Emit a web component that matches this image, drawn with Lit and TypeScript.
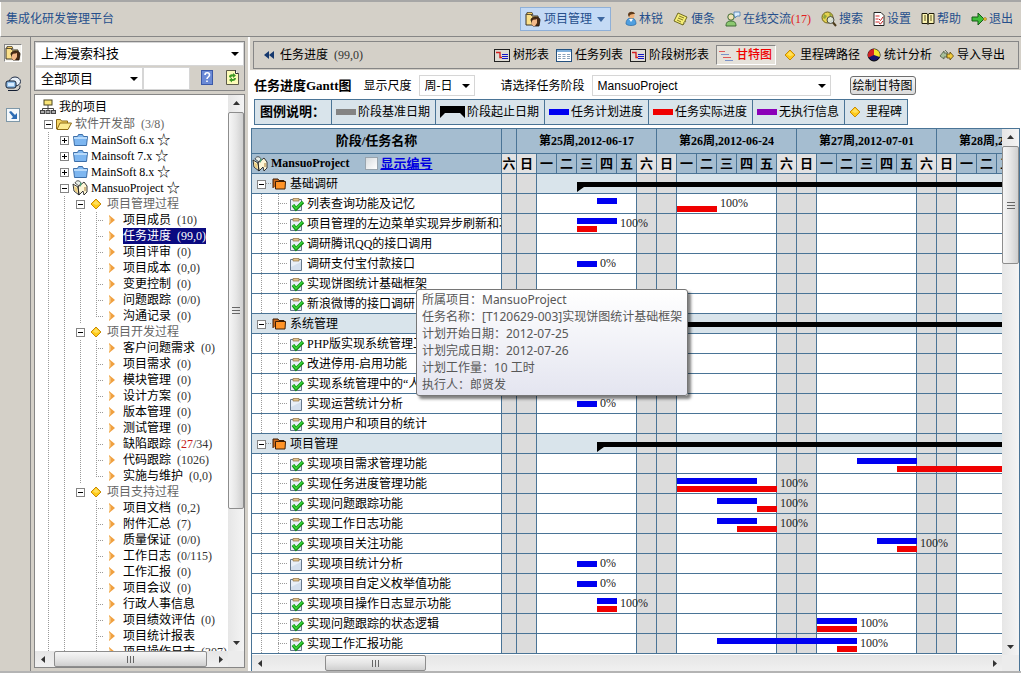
import { LitElement, html, css, svg, nothing, type TemplateResult } from "lit";
import { customElement, property } from "lit/decorators.js";
import { classMap } from "lit/directives/class-map.js";

/* ---------- icons ---------- */

const ICONS: Record<string, [string, TemplateResult]> = {
  portfolio: ["0 0 16 16", svg`
    <path d="M1 3h5l1 2h6v9H1z" fill="#fbe08a" stroke="#3a3222"/>
    <path d="M2 1.500h5l1 2h-6z" fill="#f7cf62" stroke="#3a3222" stroke-width=".7"/>
    <path d="M6 9c0-4 9-4 9 0l-1 6H8z" fill="#4a2c16" stroke="#1c1009" stroke-width=".8"/>
    <path d="M7 10c1-2 3-1 5-2v4l-2 3H8c-1-1-2-3-1-5z" fill="#f3b98a"/>`],
  user: ["0 0 12 16", svg`
    <path d="M1 13c0-4 2-6 5-6s5 2 5 6c-2 2-8 2-10 0z" fill="#4f9fe0" stroke="#2767a3" stroke-width=".7"/>
    <path d="M4 8l2 3 2-3z" fill="#fff"/><circle cx="6.500" cy="4.500" r="3" fill="#efb27a"/>
    <path d="M3 4c0-4 6-4 7-1-2 0-4 0-5 1l-1 2z" fill="#5c3a1c"/>`],
  note: ["0 0 16 16", svg`
    <path d="M5 2l9 4-4 8-9-4z" fill="#f6ee74" stroke="#6f6a22"/>
    <path d="M6 5l5 2M5 7l5 2M4 9l4 2" stroke="#827a2a" fill="none"/><path d="M10 14l1-3 2-1z" fill="#fff" stroke="#6f6a22" stroke-width=".6"/>`],
  chat: ["0 0 16 16", svg`
    <circle cx="6" cy="6" r="3.200" fill="#f1e2b4" stroke="#3d6b33"/>
    <path d="M1 15c0-4 2-5 5-5s5 1 5 5z" fill="#8cc870" stroke="#3d6b33"/>
    <path d="M9 1h6v4h-3l-2 2V5H9z" fill="#d8ebfb" stroke="#4a7bb0" stroke-width=".8"/>`],
  search: ["0 0 16 16", svg`
    <circle cx="6.500" cy="6.500" r="5.500" fill="#e6d251" stroke="#6d6118"/>
    <path d="M3 3l3 2-2 3-2-1zM8 2l3 2-2 2z" fill="#8fa63a"/>
    <circle cx="9.500" cy="9" r="3.500" fill="#dceaf2" fill-opacity=".8" stroke="#4c4c3c"/>
    <path d="M12 11.500l3 3.500" stroke="#4c3c1c" stroke-width="2"/>`],
  settings: ["0 0 12 16", svg`
    <path d="M1 1.500h7l3 3v10H1z" fill="#fff" stroke="#222"/>
    <path d="M2.500 5h4M2.500 8h3M2.500 11h4" stroke="#d22a2a"/><path d="M6 8l1.500 1.500L10 6M6 12l1.500 1L10 10" fill="none" stroke="#c01c1c"/>`],
  help: ["0 0 14 14", svg`
    <path d="M1 1.500h5l1 1 1-1h5v10H8l-1 1-1-1H1z" fill="#fbf3b0" stroke="#1d1a0a"/>
    <path d="M7 2v10" stroke="#1d1a0a" stroke-width="1.500"/><path d="M3 4h2M3 6h2M3 8h2M9 4h2M9 6h2M9 8h2" stroke="#5a5218"/>`],
  exit: ["0 0 16 16", svg`
    <path d="M1 6h6V2l6 6-6 6v-4H1z" fill="#3fbf3a" stroke="#145c14"/><circle cx="14" cy="8" r="1.500" fill="#f2c230" stroke="#8a6a10" stroke-width=".5"/>`],
  treetable: ["0 0 16 13", svg`
    <rect x=".5" y=".5" width="15" height="12" fill="#dfdcd4" stroke="#222"/>
    <path d="M2 3.500h4v5h2" fill="none" stroke="#d42020" stroke-width="1.400"/><path d="M8 5.500h6M8 7.500h6M8 9.500h6" stroke="#1414c8"/>`],
  list: ["0 0 16 13", svg`
    <rect x=".5" y=".5" width="15" height="12" fill="#fff" stroke="#24507e"/>
    <rect x="1" y="1" width="14" height="2" fill="#7fb0dc"/><path d="M2 5.500h3M6.500 5.500h3M11 5.500h3M2 7.500h3M6.500 7.500h3M11 7.500h3M2 9.500h3M6.500 9.500h3M11 9.500h3" stroke="#8aa2ba"/>`],
  gantt: ["0 0 16 13", svg`
    <path d="M1 2.500h6M5 8.500h8" stroke="#e05858"/><path d="M3 5.500h8M7 11.500h8" stroke="#7c93c8"/>`],
  diamond: ["0 0 12 12", svg`<path d="M6 1l5 5-5 5-5-5z" fill="#ffcb1a" stroke="#c78a08"/><path d="M6 2.500L9.500 6 6 7 3 5.500z" fill="#ffe060"/>`],
  pie: ["0 0 14 14", svg`
    <circle cx="7" cy="7" r="6" fill="#16166e" stroke="#000"/>
    <path d="M7 7V1a6 6 0 0 1 5.500 8z" fill="#f4e62a"/><path d="M7 7L1.500 9.500A6 6 0 0 1 7 1z" fill="#d42424"/>`],
  transfer: ["0 0 15 14", svg`
    <path d="M5 3L1 8l4 3V9h3V5H5zM6 2l3 3" fill="#a7bf9b" stroke="#4c5c46" stroke-width=".8"/>
    <path d="M8 6h3V4l3.500 4L11 12v-2H8z" fill="#f2ca3a" stroke="#5e4708" stroke-width=".8"/>`],
  back: ["0 0 10 10", svg`<path d="M5 1v8L0 5zM10 1v8L5 5z" fill="#16386e"/>`],
  caret: ["0 0 8 5", svg`<path d="M0 0h8L4 5z" fill="#3d67a0"/>`],
  windows: ["0 0 16 16", svg`
    <ellipse cx="10" cy="5.500" rx="5.500" ry="4.500" fill="#e8f0f8" stroke="#1d2b45"/>
    <rect x="1" y="5" width="10" height="7" rx="2" fill="#8ebbe4" stroke="#111c30"/><rect x="3" y="7" width="6" height="3" fill="#d8ecff"/>
    <path d="M3 14.500h8c3 0 4-2 4-5" fill="none" stroke="#111c30"/>`],
  expand: ["0 0 14 14", svg`
    <rect x=".5" y=".5" width="13" height="13" fill="#f4f8fb" stroke="#7d97a8"/>
    <path d="M3 4l2-1 4 4 2-2v6H5l2-2z" fill="#2c6cb4"/>`],
  question: ["0 0 12 15", svg`
    <rect x=".5" y=".5" width="11" height="14" fill="#6b8ad6" stroke="#3b59a8"/>
    <path d="M4 5c0-3 4.500-3 4.500 0 0 2-2.500 2-2.500 4M6 10.500v1.500" fill="none" stroke="#fff" stroke-width="1.600"/>`],
  refresh: ["0 0 13 16", svg`
    <path d="M.5 1.500h9l3 3v11H.5z" fill="#fdfbb8" stroke="#5c5a48"/><path d="M9.500 1v3.500h3" fill="#fff" stroke="#333"/>
    <path d="M3 8c0-2 2-3 4-2.500V4l3 2.500L7 9V7.500C5 7.500 5 8 5 9zM10 9c0 2-2 3.500-4 3v1.500L3 11l3-2.500V10c2 0 2-.5 2-1z" fill="#3f9a26"/>`],
  root: ["0 0 16 16", svg`
    <rect x="4" y="1" width="8" height="5" fill="#fbe678" stroke="#4a4420"/>
    <path d="M8 6v3M2.500 12V9.500h11V12M8 9v3" stroke="#444" fill="none"/>
    <rect x=".5" y="11.500" width="4" height="3" fill="#aaa" stroke="#444"/><rect x="6" y="11.500" width="4" height="3" fill="#aaa" stroke="#444"/><rect x="11.500" y="11.500" width="4" height="3" fill="#aaa" stroke="#444"/>`],
  open: ["0 0 16 12", svg`
    <path d="M.5 11V1.500h4l1 1.500h6v2" fill="#f6d666" stroke="#8d6a14"/><path d="M1 11.500l3-6.500h11.500L12 11.500z" fill="#fdeb92" stroke="#8d6a14"/>`],
  blue: ["0 0 15 12", svg`
    <path d="M.5 2.500h4l1-2h4l1 2h4l-1 9h-12z" fill="#7db6f0" stroke="#3c6ea8"/><path d="M1 3h13v2H1z" fill="#b8dafa"/>`],
  project: ["0 0 16 16", svg`
    <path d="M1 4l5 3 1 8-5-4zM6 7l6-5 3 4v6l-3 3-1-4-4 4z" fill="#fdf6d6" stroke="#222" stroke-width=".9"/>
    <path d="M3 3c1-3 5-3 6 0L7 6z" fill="#e8ede8" stroke="#333" stroke-width=".8"/><path d="M8 2l2 2-2 3z" fill="#4fa07a"/>
    <path d="M2 6l3 2 1 5-3-2z" fill="#efcf7e"/><path d="M13 7v4" stroke="#a87c30"/>`],
  arrow: ["0 0 8 10", svg`<path d="M1 0l6 5-6 5z" fill="#f0a040"/><path d="M1 1v8l1.500-2V3z" fill="#f9d9a4"/>`],
  folder: ["0 0 15 12", svg`<path d="M1 10V1h5l1 1.500h5V4" fill="#c96a1c" stroke="#3c1c04"/><path d="M3.500 3.500h10l-.5 7.500H3.500z" fill="#ff9326" stroke="#3c1c04"/>`],
  task: ["0 0 15 15", svg`
    <path d="M1.500 2.500h11v11h-11z" fill="#e9eff7" stroke="#66788c"/><path d="M4 3V1.500h6V4H4z" fill="#e3c48c" stroke="#8d7040" stroke-width=".7"/><path d="M2 10l10-5v8H2z" fill="#cbd8e8" opacity=".7"/>`],
  done: ["0 0 15 15", svg`
    <path d="M1.500 2.500h11v11h-11z" fill="#e9eff7" stroke="#66788c"/><path d="M4 3V1.500h6V4H4z" fill="#e3c48c" stroke="#8d7040" stroke-width=".7"/>
    <path d="M4 8l3 4 7-7" fill="none" stroke="#128a12" stroke-width="3.400"/><path d="M4 8l3 3.500L13.500 5" fill="none" stroke="#3ad63a" stroke-width="1.600"/>`],
  bridge: ["0 0 25 12", svg`<path d="M0 0h25v12l-5-5H5l-5 5z"/>`],
};

function icon(name: string, w: number, h = w) {
  const [box, body] = ICONS[name];
  return html`<svg class="icon" width=${w} height=${h} viewBox=${box} aria-hidden="true">${body}</svg>`;
}

const shared = css`
  :host { box-sizing: border-box; font: 12px/16px "Liberation Serif", "Noto Sans CJK SC", serif; color: #000; }
  * { box-sizing: border-box; }
  .icon { display: block; flex: none; }
  a { color: inherit; text-decoration: none; }
  select, input, button { font: inherit; color: inherit; margin: 0; }
  select { appearance: none; border: 1px solid #d6d6d6; border-radius: 0; padding: 0 16px 0 5px; outline: none; background: #fff; }
  .pick { position: relative; display: grid; }
  .pick::after {
    content: ""; position: absolute; right: 5px; top: 50%; margin-top: -2px; pointer-events: none;
    border: 4px solid transparent; border-top-color: #000; border-bottom: 0;
  }
`;

/* ---------- scroll bar ---------- */

@customElement("scroll-bar")
export class ScrollBar extends LitElement {
  @property() dir: "v" | "h" = "v";
  @property({ type: Number }) start = 0;
  @property({ type: Number }) size = 50;
  static styles = css`
    :host { display: block; }
    * { box-sizing: border-box; }
    .bar { display: flex; width: 100%; height: 100%; background: linear-gradient(90deg, #e6e6e6, #f4f4f4); align-items: center; }
    .bar.v { flex-direction: column; }
    .bar.h { background: linear-gradient(#e6e6e6, #f0f0f0); }
    .end { flex: none; width: 16px; height: 17px; display: grid; place-items: center; }
    .track { flex: 1; min-height: 0; min-width: 0; display: flex; align-self: stretch; }
    .v .track { flex-direction: column; }
    .space { flex: none; }
    .thumb { flex: none; border: 1px solid #8d8d8d; border-radius: 2px; display: grid; place-items: center;
      background: linear-gradient(90deg, #f6f6f6, #e6e6e6 50%, #cfcfcf); }
    .h .thumb { background: linear-gradient(#f6f6f6, #e6e6e6 50%, #cfcfcf); }
    .grip { width: 8px; height: 7px; background: repeating-linear-gradient(#666 0 1px, transparent 1px 3px); }
    .h .grip { width: 7px; background: repeating-linear-gradient(90deg, #666 0 1px, transparent 1px 3px); }
  `;
  render() {
    const v = this.dir === "v";
    const dim = (n: number) => (v ? `height:${n}%` : `width:${n}%`);
    const tri = (d: string) => html`<span class="end"><svg width="7" height="7" viewBox="0 0 7 7"><path d=${d} fill="#333"/></svg></span>`;
    return html`<div class="bar ${this.dir}">
      ${tri(v ? "M0 5h7L3.500 1z" : "M5 0v7L1 3.500z")}
      <div class="track"><div class="space" style=${dim(this.start)}></div>
        <div class="thumb" style=${dim(this.size)}><span class="grip"></span></div></div>
      ${tri(v ? "M0 2h7L3.500 6z" : "M2 0v7l4-3.500z")}
    </div>`;
  }
}

/* ---------- project tree ---------- */

interface Leaf { name: string; count?: string; hot?: string; on?: boolean; }
const leaf = (name: string, count?: string, extra: Partial<Leaf> = {}): Leaf => ({ name, count, ...extra });

const PHASES: { name: string; items: Leaf[] }[] = [
  { name: "项目管理过程", items: [
    leaf("项目成员", "(10)"), leaf("任务进度", "(99,0)", { on: true }), leaf("项目评审", "(0)"), leaf("项目成本", "(0,0)"),
    leaf("变更控制", "(0)"), leaf("问题跟踪", "(0/0)"), leaf("沟通记录", "(0)")] },
  { name: "项目开发过程", items: [
    leaf("客户问题需求", "(0)"), leaf("项目需求", "(0)"), leaf("模块管理", "(0)"), leaf("设计方案", "(0)"), leaf("版本管理", "(0)"),
    leaf("测试管理", "(0)"), leaf("缺陷跟踪", "/34)", { hot: "27" }), leaf("代码跟踪", "(1026)"), leaf("实施与维护", "(0,0)")] },
  { name: "项目支持过程", items: [
    leaf("项目文档", "(0,2)"), leaf("附件汇总", "(7)"), leaf("质量保证", "(0/0)"), leaf("工作日志", "(0/115)"), leaf("工作汇报", "(0)"),
    leaf("项目会议", "(0)"), leaf("行政人事信息"), leaf("项目绩效评估", "(0)"), leaf("项目统计报表"), leaf("项目操作日志", "(307)")] },
];

@customElement("project-tree")
export class ProjectTree extends LitElement {
  static styles = [shared, css`
    :host { display: block; overflow: hidden; background: #fff; }
    .tree { padding: 2px 0 0 5px; white-space: nowrap; }
    .root { display: flex; align-items: center; gap: 3px; height: 19px; }
    .row { display: flex; height: 16px; align-items: center; }
    .g { flex: none; width: 16px; height: 16px; display: grid; place-items: center; }
    .line { background: repeating-linear-gradient(#999 0 1px, transparent 1px 2px) 8px 0 / 1px 100% no-repeat; }
    .tee { background:
      repeating-linear-gradient(#999 0 1px, transparent 1px 2px) 8px 0 / 1px 100% no-repeat,
      repeating-linear-gradient(90deg, #999 0 1px, transparent 1px 2px) 8px 8px / 8px 1px no-repeat; }
    .ell { background:
      repeating-linear-gradient(#999 0 1px, transparent 1px 2px) 8px 0 / 1px 9px no-repeat,
      repeating-linear-gradient(90deg, #999 0 1px, transparent 1px 2px) 8px 8px / 8px 1px no-repeat; }
    .tog { width: 9px; height: 9px; padding: 0; border: 1px solid #848484; background:
      linear-gradient(#000, #000) center / 5px 1px no-repeat, #fff; }
    .tog.plus { background: linear-gradient(#000, #000) center / 5px 1px no-repeat, linear-gradient(#000, #000) center / 1px 5px no-repeat, #fff; }
    .t { margin-left: 3px; display: flex; gap: 6px; height: 16px; line-height: 16px; }
    .t.soft { color: #666; }
    .n { color: #333; }
    .soft .n { color: #666; }
    .t.on { background: #0a0a80; color: #fff; }
    .on .n { color: #fff; }
    .hot { color: #c41818; }
    .star { font-size: 13px; }
  `];
  private toggle(plus: boolean) {
    return html`<span class="g"><button class=${classMap({ tog: true, plus })} aria-label=${plus ? "展开" : "折叠"}></button></span>`;
  }
  render() {
    const g = html`<span class="g line"></span>`;
    const e = html`<span class="g"></span>`;
    const proj = (name: string, plus: boolean, ic: TemplateResult) => html`
      <div class="row">${g}${this.toggle(plus)}<span class="g">${ic}</span><a href="#" class="t"><span>${name} <span class="star">☆</span></span></a></div>`;
    return html`<div class="tree">
      <div class="root">${icon("root", 16)}<span>我的项目</span></div>
      <div class="row">${this.toggle(false)}<span class="g">${icon("open", 16, 12)}</span><a href="#" class="t soft"><span>软件开发部</span><span class="n">(3/8)</span></a></div>
      ${["MainSoft 6.x", "Mainsoft 7.x", "MainSoft 8.x"].map((n) => proj(n, true, icon("blue", 15, 12)))}
      ${proj("MansuoProject", false, icon("project", 16))}
      ${PHASES.map((p, i) => {
        const last = i === PHASES.length - 1;
        return html`<div class="row">${g}${g}${this.toggle(false)}<span class="g">${icon("diamond", 12)}</span><a href="#" class="t soft">${p.name}</a></div>
          ${p.items.map((it, k) => html`<div class="row">${g}${g}${last ? e : g}
            <span class="g ${!last && k === p.items.length - 1 ? "ell" : "tee"}"></span><span class="g">${icon("arrow", 8, 10)}</span>
            <a href="#" class=${classMap({ t: true, on: !!it.on })}><span>${it.name}</span>${it.count
              ? html`<span class="n">${it.hot ? html`(<span class="hot">${it.hot}</span>` : nothing}${it.count}</span>` : nothing}</a></div>`)}`;
      })}
    </div>`;
  }
}

/* ---------- gantt chart ---------- */

type Span = [number, number];
interface Row { name: string; phase?: boolean; done?: boolean; plan?: Span; actual?: Span; pct?: string; from?: number; }
const DAYS = 28;

const ROWS: Row[] = [
  { name: "基础调研", phase: true, from: 3 },
  { name: "列表查询功能及记忆", done: true, plan: [4, 5], actual: [8, 10], pct: "100%" },
  { name: "项目管理的左边菜单实现异步刷新和功能", done: true, plan: [3, 5], actual: [3, 4], pct: "100%" },
  { name: "调研腾讯QQ的接口调用", done: true },
  { name: "调研支付宝付款接口", plan: [3, 4], pct: "0%" },
  { name: "实现饼图统计基础框架", done: true },
  { name: "新浪微博的接口调研", done: true },
  { name: "系统管理", phase: true, from: 3 },
  { name: "PHP版实现系统管理工具", done: true },
  { name: "改进停用-启用功能", done: true },
  { name: "实现系统管理中的“人员”", done: true },
  { name: "实现运营统计分析", plan: [3, 4], pct: "0%" },
  { name: "实现用户和项目的统计", done: true },
  { name: "项目管理", phase: true, from: 4 },
  { name: "实现项目需求管理功能", done: true, plan: [17, 20], actual: [19, 28] },
  { name: "实现任务进度管理功能", done: true, plan: [8, 12], actual: [8, 13], pct: "100%" },
  { name: "实现问题跟踪功能", done: true, plan: [10, 12], actual: [12, 13], pct: "100%" },
  { name: "实现工作日志功能", done: true, plan: [10, 12], actual: [11, 13], pct: "100%" },
  { name: "实现项目关注功能", done: true, plan: [18, 20], actual: [19, 20], pct: "100%" },
  { name: "实现项目统计分析", plan: [3, 4], pct: "0%" },
  { name: "实现项目自定义枚举值功能", plan: [3, 4], pct: "0%" },
  { name: "实现项目操作日志显示功能", done: true, plan: [4, 5], actual: [4, 5], pct: "100%" },
  { name: "实现问题跟踪的状态逻辑", done: true, plan: [15, 17], actual: [15, 17], pct: "100%" },
  { name: "实现工作汇报功能", done: true, plan: [10, 17], actual: [16, 17], pct: "100%" },
];

@customElement("gantt-chart")
export class GanttChart extends LitElement {
  static styles = [shared, css`
    :host { display: grid; grid-template: minmax(0, 1fr) 16px / minmax(0, 1fr) 17px; position: relative;
      border: 1px solid #4a7496; border-bottom: 0; background: #fff; }
    scroll-bar.h { grid-column: 1; }
    scroll-bar.v { grid-column: 2; grid-row: 1; }
    .corner { grid-column: 2; grid-row: 2; background: #ececec; }
    .view { overflow: hidden; }
    .row { display: grid; grid-template: 19px / 249px 15px repeat(28, 20px); border-bottom: 1px solid #4a7496; width: max-content; }
    .row.top { grid-template-rows: 24px; }
    .row > * { grid-row: 1; }
    .head { background: #a5bdd0; font-weight: bold; }
    .phase { background: #d9e4eb; }
    .title { text-align: center; font-size: 13px; line-height: 24px; }
    .week { border-left: 1px solid #4a7496; text-align: center; line-height: 24px; overflow: hidden; white-space: nowrap; }
    .day { border-left: 1px solid #4a7496; text-align: center; line-height: 19px; overflow: hidden; font-size: 13px; display: flex; justify-content: center; }
    .off { background: #dcdcdc; border-left: 1px solid #4a7496; }
    .day.off { background: #e2e2e2; }
    .edge { border-left: 1px solid #4a7496; }
    .who { display: flex; align-items: center; gap: 3px; font-size: 13px; line-height: 19px; }
    .who span { font-size: 12px; }
    .opt { display: flex; align-items: center; gap: 2px; margin-left: 13px; }
    .opt input { width: 13px; height: 13px; appearance: none; border: 1px solid #98a4ae; background: linear-gradient(135deg, #d8dcdf, #fff); }
    .opt a { color: #0000e0; text-decoration: underline; }
    .name { grid-column: 1; display: flex; align-items: center; overflow: hidden; white-space: nowrap; line-height: 18px; gap: 3px;
      padding: 1px 0 0 37px;
      background:
        repeating-linear-gradient(#999 0 1px, transparent 1px 2px) 9px 0 / 1px 100% no-repeat,
        repeating-linear-gradient(#999 0 1px, transparent 1px 2px) 26px 0 / 1px 100% no-repeat,
        repeating-linear-gradient(90deg, #999 0 1px, transparent 1px 2px) 26px 9px / 9px 1px no-repeat; }
    .phase .name { padding-left: 5px;
      background: repeating-linear-gradient(90deg, #999 0 1px, transparent 1px 2px) 14px 9px / 5px 1px no-repeat; }
    .phase .icon { margin-left: 3px; }
    .tog { width: 9px; height: 9px; padding: 0; border: 1px solid #848484; background: linear-gradient(#000, #000) center / 5px 1px no-repeat, #fff; }
    .bar { height: 6px; align-self: start; margin: 4px -1px 0 1px; background: #0000f0; }
    .bar.single { margin-top: 7px; }
    .bar.actual { background: #f00000; margin-top: 12px; }
    .bar.span { height: 10px; margin-top: 8px; background: #000; clip-path: polygon(0 0, 100% 0, 100% 5px, 7px 5px, 0 100%); }
    .pct { padding-left: 4px; line-height: 19px; white-space: nowrap; color: #222; }
    .tip { position: absolute; left: 164px; top: 160px; padding: 1px 5px 2px; border: 1px solid #767676; border-radius: 3px;
      background: linear-gradient(#fff, #e4e5f0); box-shadow: 3px 3px 3px rgba(0, 0, 0, .5);
      font-family: "Noto Sans", "Noto Sans CJK SC", sans-serif; line-height: 17px; color: #575757; white-space: nowrap; }
  `];
  render() {
    const days = Array.from({ length: DAYS }, (_, i) => i);
    const line = (d: number) => `grid-column:${d + 3}`;
    const span = ([a, b]: Span) => `grid-column:${a + 3}/${b + 3}`;
    const off = (d: number) => d % 7 === 0 || d % 7 === 6;
    return html`
      <div class="view" role="table" aria-label="任务进度Gantt图">
        <div class="row head top" role="row">
          <div class="title" role="columnheader">阶段/任务名称</div><div class="edge"></div>
          ${["第25周,2012-06-17", "第26周,2012-06-24", "第27周,2012-07-01", "第28周,2012-07-08"].map((w, i) => html`
            <div class="week" role="columnheader" style=${span([i * 7, i * 7 + 7])}>${w}</div>`)}
        </div>
        <div class="row head" role="row">
          <div class="who">${icon("project", 16)}<span>MansuoProject</span>
            <label class="opt"><input type="checkbox" aria-label="显示编号"><a href="#">显示编号</a></label></div>
          <div class="day off">六</div>
          ${days.map((d) => html`<div class=${classMap({ day: true, off: off(d) })} style=${line(d)}>${"日一二三四五六"[d % 7]}</div>`)}
        </div>
        ${ROWS.map((r) => {
          const end = r.plan ? Math.max(r.plan[1], r.actual?.[1] ?? 0) : 0;
          return html`<div class=${classMap({ row: true, phase: !!r.phase })} role="row">
          <div class="name" role="cell">
            ${r.phase ? html`<button class="tog" aria-label="折叠"></button>${icon("folder", 15, 12)}` : icon(r.done ? "done" : "task", 15)}
            <span>${r.name}</span></div>
          <div class="off"></div>
          ${days.map((d) => off(d) ? html`<div class="off" style=${line(d)}></div>` : d % 7 === 1 ? html`<div class="edge" style=${line(d)}></div>` : nothing)}
          ${r.phase ? html`<div class="bar span" style=${span([r.from!, DAYS])}></div>` : nothing}
          ${r.plan ? html`<div class=${classMap({ bar: true, single: !r.actual })} style=${span(r.plan)}></div>` : nothing}
          ${r.actual ? html`<div class="bar actual" style=${span(r.actual)}></div>` : nothing}
          ${r.pct ? html`<div class="pct" style=${span([end, end + 2])}>${r.pct}</div>` : nothing}
        </div>`;
        })}
      </div>
      <scroll-bar class="v" dir="v" .start=${0} .size=${24}></scroll-bar>
      <scroll-bar class="h" dir="h" .start=${8} .size=${14}></scroll-bar>
      <div class="corner"></div>
      <div class="tip" role="tooltip">
        <div>所属项目：MansuoProject</div><div>任务名称：[T120629-003]实现饼图统计基础框架</div>
        <div>计划开始日期：2012-07-25</div><div>计划完成日期：2012-07-26</div>
        <div>计划工作量：10 工时</div><div>执行人：郎贤发</div>
      </div>`;
  }
}

/* ---------- page ---------- */

@customElement("app-root")
export class AppRoot extends LitElement {
  static styles = [shared, css`
    :host { display: flex; flex-direction: column; height: 100vh; background: #d4d0c8; overflow: hidden;
      border-top: 2px solid #a6a6a6; border-bottom: 2px solid #b4b4b4; }
    header { flex: none; height: 35px; display: flex; align-items: center; padding: 0 8px 0 5px; border-bottom: 1px solid #868686; color: #264f8c; border-left: 1px solid #fff; }
    .brand { margin-right: auto; }
    .menu { display: flex; align-items: center; gap: 3px; height: 24px; padding: 0 5px 0 4px; border: 1px solid #8fb0d8; background: #c4daf5; color: #264f8c; }
    .menu .icon:last-child { margin-left: 2px; }
    nav { display: flex; gap: 10px; margin-left: 14px; }
    nav a { display: flex; align-items: center; gap: 2px; }
    .red { color: #e02020; }
    main { flex: 1; min-height: 0; display: flex; }
    .rail { flex: none; width: 31px; border-right: 1px solid #868686; padding: 7px 0 0 4px; display: flex; flex-direction: column; gap: 13px; }
    .rail a { width: 18px; height: 18px; display: grid; place-items: center; }
    .rail a.on { border: 1px solid; border-color: #868686 #fff #fff #868686; background: #f4f2ec; }
    aside { flex: none; width: 219px; padding: 4px 3px 3px 3px; display: flex; flex-direction: column; gap: 3px; border-right: 2px solid #fff; }
    .filters { flex: none; border: 1px solid #868686; height: 50px; display: grid; grid-template-rows: 24px 23px; gap: 1px; font-size: 13px; }
    .filters .pair { display: flex; }
    .filters .kind { width: 108px; }
    .filters input { width: 47px; border: 1px solid #d6d6d6; outline: none; min-width: 0; }
    .tools { flex: 1; display: flex; justify-content: space-between; align-items: center; padding: 0 5px 3px 11px; }
    .treebox { flex: 1; min-height: 0; border: 1px solid #868686; display: grid; grid-template: minmax(0, 1fr) 16px / minmax(0, 1fr) 16px; background: #ececec; }
    .treebox .h { grid-column: 1; grid-row: 2; }
    .content { flex: 1; min-width: 0; display: flex; flex-direction: column; }
    .toolbar { flex: none; margin: 4px 2px 0 3px; height: 28px; border: 1px solid #868686; display: flex; align-items: center; gap: 7px; padding: 0 13px 0 10px; }
    .where { margin-right: auto; display: flex; gap: 6px; align-items: center; }
    .where span { color: #333; }
    .toolbar a { display: flex; align-items: center; gap: 3px; white-space: nowrap; }
    .toolbar a.on { height: 20px; padding: 0 3px 0 1px; border: 1px solid; border-color: #868686 #fff #fff #868686; background: #e6e2da; color: #f00000; font-weight: 500; gap: 2px; }
    .sheet { flex: 1; min-height: 0; background: #fff; display: flex; flex-direction: column; margin-top: 1px; }
    .params { flex: none; display: flex; height: 29px; align-items: center; padding: 2px 0 0 4px; }
    .params h1 { margin: 0 12px 0 0; font-size: 13px; }
    .params label { display: flex; align-items: center; gap: 7px; margin-right: 26px; }
    .params select { height: 21px; }
    .scale { width: 56px; }
    .stage { width: 239px; }
    .stage select { font-family: "Liberation Sans", sans-serif; }
    .params label.second { margin-right: 19px; }
    .params button { height: 19px; padding: 0 2px; border: 1px solid #6e6e6e; border-radius: 3px; background: linear-gradient(#f6f6f6, #dadada); line-height: 16px; }
    .legend { flex: none; display: flex; height: 26px; margin: 0 0 3px 4px; width: max-content; border: 1px solid #4a7496; border-left: 0; background: #d9e4eb; }
    .legend > div { display: flex; align-items: center; gap: 2px; border-left: 1px solid #4a7496; padding: 0 5px 0 4px; }
    .legend .cap { font-weight: bold; font-size: 13px; padding: 0 6px 0 5px; }
    .swatch { width: 20px; height: 6px; }
    .grey { background: #848484; } .blue { background: #0000f0; } .crimson { background: #f00000; } .purple { background: #8b00b8; }
    .legend .mile { gap: 5px; }
    gantt-chart { flex: 1; min-height: 0; margin: 0 1px 0 1px; }
  `];
  render() {
    return html`
      <header>
        <span class="brand">集成化研发管理平台</span>
        <button class="menu">${icon("portfolio", 16)}项目管理${icon("caret", 8, 5)}</button>
        <nav>
          <a href="#">${icon("user", 12, 16)}林锐</a><a href="#">${icon("note", 16)}便条</a>
          <a href="#">${icon("chat", 16)}<span>在线交流<span class="red">(17)</span></span></a>
          <a href="#">${icon("search", 16)}搜索</a><a href="#">${icon("settings", 12, 16)}设置</a>
          <a href="#">${icon("help", 14)}帮助</a><a href="#">${icon("exit", 16)}退出</a>
        </nav>
      </header>
      <main>
        <div class="rail">
          <a class="on" href="#" aria-label="项目">${icon("portfolio", 16)}</a>
          <a href="#" aria-label="窗口">${icon("windows", 16)}</a>
          <a href="#" aria-label="展开">${icon("expand", 14)}</a>
        </div>
        <aside>
          <div class="filters">
            <div class="pick"><select aria-label="公司"><option>上海漫索科技</option></select></div>
            <div class="pair">
              <div class="pick kind"><select aria-label="范围"><option>全部项目</option></select></div>
              <input type="text" aria-label="关键字">
              <div class="tools">${icon("question", 12, 15)}${icon("refresh", 13, 16)}</div>
            </div>
          </div>
          <div class="treebox">
            <project-tree></project-tree>
            <scroll-bar dir="v" .start=${0} .size=${76}></scroll-bar>
            <scroll-bar class="h" dir="h" .start=${2} .size=${95}></scroll-bar>
          </div>
        </aside>
        <div class="content">
          <div class="toolbar">
            <div class="where">${icon("back", 10)}任务进度<span>(99,0)</span></div>
            <a href="#">${icon("treetable", 16, 13)}树形表</a><a href="#">${icon("list", 16, 13)}任务列表</a>
            <a href="#">${icon("treetable", 16, 13)}阶段树形表</a><a href="#" class="on">${icon("gantt", 16, 13)}甘特图</a>
            <a href="#">${icon("diamond", 14, 12)}里程碑路径</a><a href="#">${icon("pie", 14)}统计分析</a>
            <a href="#">${icon("transfer", 15, 14)}导入导出</a>
          </div>
          <div class="sheet">
            <div class="params">
              <h1>任务进度Gantt图</h1>
              <label>显示尺度<span class="pick scale"><select><option>周-日</option></select></span></label>
              <label class="second">请选择任务阶段<span class="pick stage"><select><option>MansuoProject</option></select></span></label>
              <button>绘制甘特图</button>
            </div>
            <div class="legend">
              <div class="cap">图例说明：</div>
              <div><span class="swatch grey"></span>阶段基准日期</div>
              <div>${icon("bridge", 25, 12)}阶段起止日期</div>
              <div><span class="swatch blue"></span>任务计划进度</div>
              <div><span class="swatch crimson"></span>任务实际进度</div>
              <div><span class="swatch purple"></span>无执行信息</div>
              <div class="mile">${icon("diamond", 12)}里程碑</div>
            </div>
            <gantt-chart></gantt-chart>
          </div>
        </div>
      </main>`;
  }
}
